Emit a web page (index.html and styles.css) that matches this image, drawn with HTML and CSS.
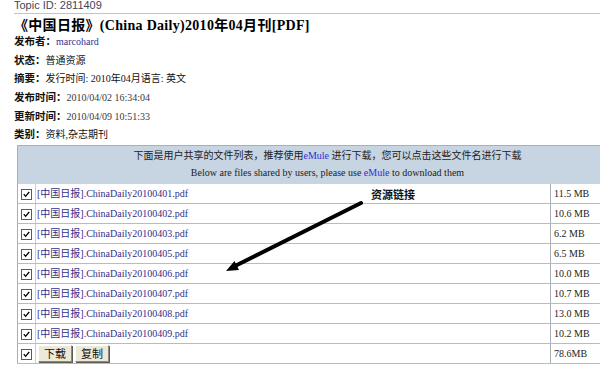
FILE: index.html
```html
<!DOCTYPE html>
<html lang="zh-CN">
<head>
  <meta charset="UTF-8" />
  <title>《中国日报》(China Daily)2010年04月刊[PDF]</title>
  <link rel="stylesheet" href="styles.css">
</head>
<body>

  <div class="topic">Topic ID: 2811409</div>
  <h1 class="titel">《中国日报》(China Daily)2010年04月刊[PDF]</h1>

  <!-- Infos -->
  <div class="info"><b>发布者：</b><a href="#">marcohard</a></div>
  <div class="info"><b>状态：</b>普通资源</div>
  <div class="info"><b>摘要：</b>发行时间: 2010年04月语言: 英文</div>
  <div class="info"><b>发布时间：</b><span class="datum">2010/04/02 16:34:04</span></div>
  <div class="info"><b>更新时间：</b><span class="datum">2010/04/09 10:51:33</span></div>
  <div class="info"><b>类别：</b>资料,杂志期刊</div>

  <!-- Dateiliste -->
  <table class="dateien">
    <tr class="kopf">
      <td colspan="3">
        <div>下面是用户共享的文件列表，推荐使用<a href="#">eMule</a> 进行下载，您可以点击这些文件名进行下载</div>
        <div>Below are files shared by users, please use <a href="#">eMule</a> to download them</div>
      </td>
    </tr>
    <tr><td class="box"><span class="check"></span></td><td class="name"><a href="#">[中国日报].ChinaDaily20100401.pdf</a></td><td class="groesse">11.5 MB</td></tr>
    <tr><td class="box"><span class="check"></span></td><td class="name"><a href="#">[中国日报].ChinaDaily20100402.pdf</a></td><td class="groesse">10.6 MB</td></tr>
    <tr><td class="box"><span class="check"></span></td><td class="name"><a href="#">[中国日报].ChinaDaily20100403.pdf</a></td><td class="groesse">6.2 MB</td></tr>
    <tr><td class="box"><span class="check"></span></td><td class="name"><a href="#">[中国日报].ChinaDaily20100405.pdf</a></td><td class="groesse">6.5 MB</td></tr>
    <tr><td class="box"><span class="check"></span></td><td class="name"><a href="#">[中国日报].ChinaDaily20100406.pdf</a></td><td class="groesse">10.0 MB</td></tr>
    <tr><td class="box"><span class="check"></span></td><td class="name"><a href="#">[中国日报].ChinaDaily20100407.pdf</a></td><td class="groesse">10.7 MB</td></tr>
    <tr><td class="box"><span class="check"></span></td><td class="name"><a href="#">[中国日报].ChinaDaily20100408.pdf</a></td><td class="groesse">13.0 MB</td></tr>
    <tr><td class="box"><span class="check"></span></td><td class="name"><a href="#">[中国日报].ChinaDaily20100409.pdf</a></td><td class="groesse">10.2 MB</td></tr>
    <tr>
      <td class="box"><span class="check"></span></td>
      <td class="name"><button>下载</button><button>复制</button></td>
      <td class="groesse">78.6MB</td>
    </tr>
  </table>

  <!-- Markierung -->
  <div class="hinweis">资源链接</div>
  <svg class="pfeil" width="600" height="365" viewBox="0 0 600 365">
    <line x1="361" y1="203" x2="235" y2="266" stroke="#000" stroke-width="4" stroke-linecap="round" />
    <polygon points="226,271 239,270 234.5,261" fill="#000" />
  </svg>

</body>
</html>
```

FILE: styles.css
```css
html, body {
  overflow: hidden;
}
body {
  margin: 0;
  padding: 0 0 0 14px;
  font-family: "Liberation Serif", "Noto Sans CJK SC", serif;
  font-size: 10px;
  color: #111;
  background: #fff;
}
a {
  color: #33338f;
  text-decoration: none;
}
.topic {
  margin-top: -1px;
  padding-bottom: 2px;
  line-height: 12px;
  font-family: "Liberation Sans", sans-serif;
  font-size: 11px;
  color: #3c4858;
  border-bottom: 1px solid #c4c4c4;
}
.titel {
  margin: 0;
  padding-top: 2px;
  height: 17px;
  font-size: 14px;
  line-height: 19px;
  font-weight: bold;
  letter-spacing: 0.3px;
  color: #000;
}
.info {
  height: 18.7px;
  line-height: 18.7px;
}
.info b {
  font-family: "Noto Sans CJK SC", sans-serif;
  font-size: 10.5px;
  line-height: 10px;
  font-weight: bold;
}
.datum {
  color: #3a3a3a;
}
.dateien {
  margin-left: 3px;
  width: 601px;
  border-collapse: collapse;
  border: 1px solid #a9afb8;
}
.dateien td {
  padding: 0;
}
.kopf td {
  height: 35px;
  padding: 1px 0 2px 20px;
  background: #c7d4e2;
  text-align: center;
  color: #222;
  line-height: 17px;
  vertical-align: top;
}
.kopf a {
  color: #2f2fd0;
}
.dateien tr + tr td {
  height: 19px;
  line-height: 14px;
  border-bottom: 1px solid #b7bcc4;
}
.box {
  width: 17px;
  text-align: center;
  border-right: 1px solid #c9ccd8;
}
.check {
  display: inline-block;
  width: 9px;
  height: 9px;
  border: 1px solid #5a5a5a;
  background: #fff url("data:image/svg+xml,%3Csvg xmlns='http://www.w3.org/2000/svg' width='9' height='9'%3E%3Cpath d='M1.8 4.2 L3.6 6.3 L7.2 2' fill='none' stroke='%23000' stroke-width='1.3'/%3E%3C/svg%3E") no-repeat;
  vertical-align: middle;
}
.name {
  padding-left: 1px !important;
}
.name a {
  color: #30308c;
}
.groesse {
  width: 63px;
  padding-left: 3px !important;
  border-left: 1px solid #a9afb8;
  color: #222;
}
button {
  margin: 0 2px 0 1px;
  padding: 0 5px;
  height: 17px;
  font-family: "Noto Sans CJK SC", sans-serif;
  font-size: 11px;
  line-height: 13px;
  color: #111;
  background: #ece9d8;
  border: 1px solid;
  border-color: #fff #8c8a80 #8c8a80 #fff;
  box-shadow: 1px 1px 0 #5c5a54;
  vertical-align: middle;
}
.hinweis {
  position: absolute;
  left: 371px;
  top: 186px;
  font-family: "Noto Sans CJK SC", sans-serif;
  font-size: 11px;
  font-weight: bold;
  line-height: 16px;
}
.pfeil {
  position: absolute;
  left: 0;
  top: 0;
  pointer-events: none;
}
```
